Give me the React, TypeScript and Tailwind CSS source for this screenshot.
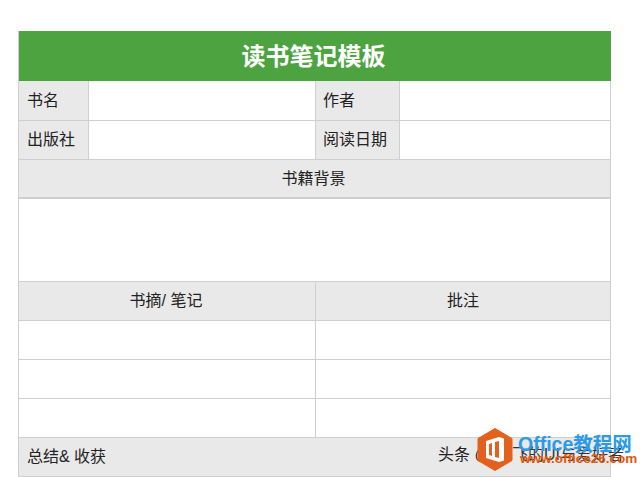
const cell = "flex items-center border-r border-b border-[#cfcfcf] text-[16px] text-[#222] min-w-0";
const label = cell + " bg-[#e9e9e9] pl-[8px]";
const labelRight = cell + " bg-[#e9e9e9] pl-[7px]";
const head = cell + " bg-[#e9e9e9] justify-center";
const blank = cell + " bg-white";

function Logo() {
  return (
    <svg width="36" height="43" viewBox="0 0 36 43">
      <path d="M18 0.5 L35 10.5 L35 32.5 L18 42.5 L1 32.5 L1 10.5 Z" fill="#e2611c" stroke="#e2611c" strokeLinejoin="round" />
      <path d="M9 13 L22 9 L27 10.5 L27 32.5 L22 34 L9 30 Z M15 15 L12 16 L12 27 L15 28 Z M22 13 L18 14 L18 29 L22 30 Z" fill="#fff" fillRule="evenodd" />
    </svg>
  );
}

export default function App() {
  return (
    <div className="relative h-[477px] w-[640px] overflow-hidden bg-white font-['Liberation_Sans','Noto_Sans_CJK_SC',sans-serif]">
      <div className="pl-[18px] pt-[31px]">
        <div className="grid w-[593px] grid-cols-[70px_227px_84px_211px] grid-rows-[50px_40px_39px_39px_83px_39px_39px_39px_39px_39px] border-l border-[#cfcfcf]">
          <div className="col-span-4 flex items-center justify-center bg-[#4ca340] pr-[3px] pt-[1px] text-[24px] font-bold text-white">读书笔记模板</div>
          <div className={label}>书名</div>
          <div className={blank}></div>
          <div className={labelRight}>作者</div>
          <div className={blank}></div>
          <div className={label}>出版社</div>
          <div className={blank}></div>
          <div className={labelRight}>阅读日期</div>
          <div className={blank}></div>
          <div className={"col-span-4 pr-[2px] " + head + " border-b-2"}>书籍背景</div>
          <div className={"col-span-4 " + blank}></div>
          <div className={"col-span-2 pr-[2px] " + head}>书摘/ 笔记</div>
          <div className={"col-span-2 " + head}>批注</div>
          <div className={"col-span-2 " + blank}></div>
          <div className={"col-span-2 " + blank}></div>
          <div className={"col-span-2 " + blank}></div>
          <div className={"col-span-2 " + blank}></div>
          <div className={"col-span-2 " + blank}></div>
          <div className={"col-span-2 " + blank}></div>
          <div className={"col-span-4 " + label}>总结&amp; 收获</div>
        </div>
      </div>
      <div className="absolute left-[438px] top-[445px] whitespace-nowrap text-[16px] leading-[20px] text-[#222]">头条 @</div>
      <div className="absolute left-[512px] top-[445px] whitespace-nowrap text-[16px] leading-[20px] text-[#333]">飞的UI与爱好者</div>
      <div className="absolute left-[477px] top-[428px]"><Logo /></div>
      <div className="absolute left-[518px] top-[431px] whitespace-nowrap text-[19.5px] font-bold leading-[26px] text-[#2b9be8]">Office教程网</div>
      <div className="absolute left-[520px] top-[451px] whitespace-nowrap text-[13.5px] font-bold leading-[16px] text-[#e0580f]">www.office26.com</div>
    </div>
  );
}
